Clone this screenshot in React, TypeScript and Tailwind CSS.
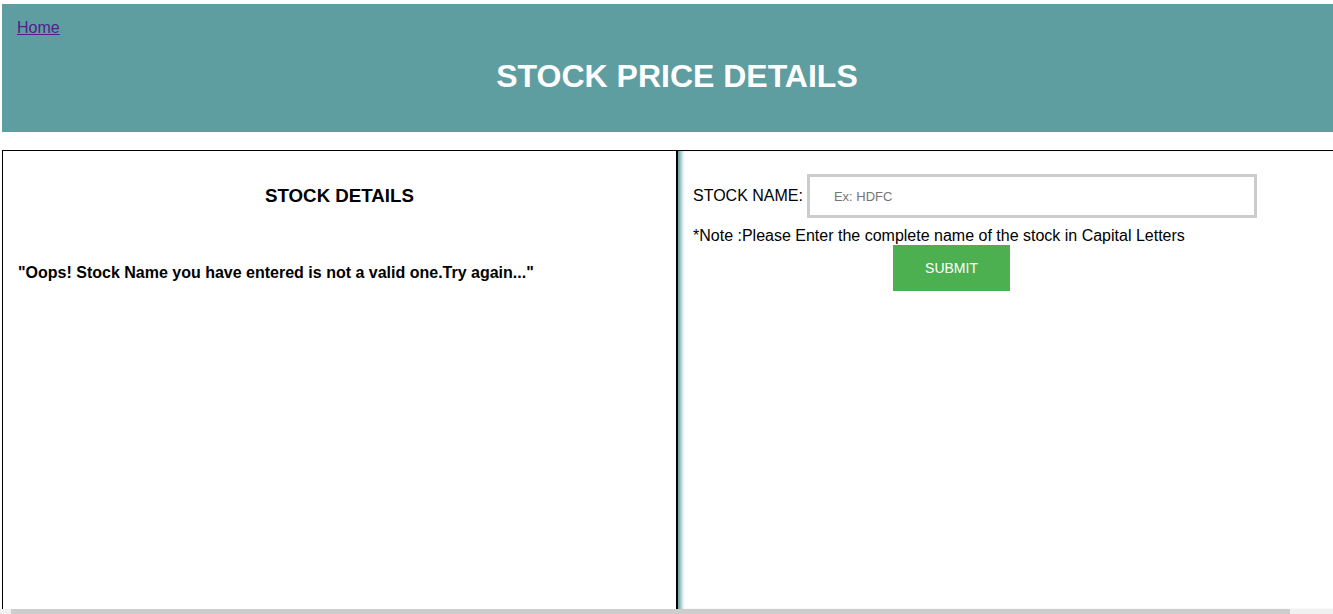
import React from "react";

export default function App() {
  return (
    <div className="w-[1333px] h-[614px] overflow-hidden flex flex-col bg-white font-['Liberation_Sans',Arial,sans-serif] text-black">
      <div className="pt-[4px] pl-[2px] shrink-0">
        <div className="w-[1350px] h-[128px] bg-[#5f9ea0] flex flex-col pl-[15px] pt-[15px]">
          <a href="#" className="text-[16px] leading-[18px] text-[#551a8b] underline self-start">Home</a>
          <h1 className="text-[32px] leading-[37px] font-bold text-white text-center mt-[21px] pr-[15px]">STOCK PRICE DETAILS</h1>
        </div>
      </div>
      <div className="mt-[18px] ml-[2px] h-[459px] flex border-t border-black shrink-0">
        <div className="w-[675px] border-l border-r border-black flex flex-col">
          <h2 className="text-[18.72px] leading-[22px] font-bold text-center mt-[34px]">STOCK DETAILS</h2>
          <p className="text-[16px] leading-[18px] font-bold mt-[57px] ml-[15px]">"Oops! Stock Name you have entered is not a valid one.Try again..."</p>
        </div>
        <div className="flex-1 border-l border-black shadow-[inset_6px_0_4px_-3px_#5f9ea0] pl-[15px] pt-[23px] flex flex-col">
          <div className="flex items-center">
            <span className="text-[16px] leading-[18px]">STOCK NAME:</span>
            <input
              placeholder="Ex: HDFC"
              className="ml-[4px] w-[450px] h-[44px] border-[3px] border-[#cccccc] pl-[24px] text-[13px] placeholder:text-[#757575] outline-none"
            />
          </div>
          <p className="text-[16px] leading-[18px] mt-[9px]">*Note :Please Enter the complete name of the stock in Capital Letters</p>
          <button className="ml-[200px] w-[117px] h-[46px] bg-[#4caf50] text-white text-[14px] self-start">SUBMIT</button>
        </div>
      </div>
      <div className="h-[5px] bg-[#f1f1f1] flex shrink-0">
        <div className="ml-[11px] w-[1279px] bg-[#cdcdcd]" />
      </div>
    </div>
  );
}
